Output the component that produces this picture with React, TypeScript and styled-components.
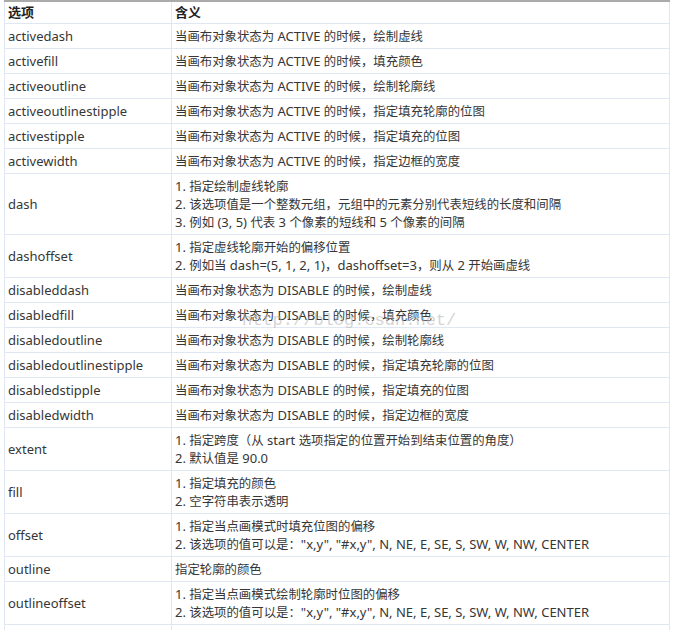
import React from "react";
import styled, { createGlobalStyle } from "styled-components";

const Global = createGlobalStyle`
  html, body { margin: 0; padding: 0; background: #fff; }
  body { font-family: "Noto Sans", "Noto Sans CJK SC", sans-serif; }
`;

const Page = styled.div`
  position: relative;
  padding-left: 4px;
  width: 666px;
  height: 630px;
  overflow: hidden;
`;

const Table = styled.table`
  width: 666px;
  border-collapse: collapse;
  table-layout: fixed;
  font-size: 13px;
  line-height: 18px;
  color: #363636;
`;

const HeadCell = styled.th<{ $w?: number }>`
  text-align: left;
  font-weight: bold;
  color: #222;
  border-top: 2px solid #aaa;
  border-bottom: 1px solid #dfe8f2;
  border-left: 1px solid #dfe8f2;
  border-right: 1px solid #dfe8f2;
  padding: 1px 3px 2px;
  width: ${(p) => (p.$w ? `${p.$w}px` : "auto")};
`;

const Cell = styled.td`
  border: 1px solid #dfe8f2;
  padding: 3px 3px;
  vertical-align: middle;
  white-space: nowrap;
`;

const Line = styled.div`
  height: 18px;
  line-height: 18px;
`;

const Cjk = styled.span`
  font-size: 12.4px;
  line-height: 1;
`;

const Watermark = styled.div`
  position: absolute;
  left: 242px;
  top: 311px;
  font-family: "Liberation Mono", monospace;
  font-size: 17px;
  color: rgba(175, 175, 175, 0.55);
  pointer-events: none;
`;

const CJK_RE = /([\u3000-\u303f\u4e00-\u9fff\uff00-\uffef]+)/;

function Mixed({ text }: { text: string }) {
  const parts = text.split(CJK_RE);
  return (
    <>
      {parts.map((p, i) => (CJK_RE.test(p) ? <Cjk key={i}>{p}</Cjk> : <React.Fragment key={i}>{p}</React.Fragment>))}
    </>
  );
}

const rows: [string, string[]][] = [
  ["activedash", ["当画布对象状态为 ACTIVE 的时候，绘制虚线"]],
  ["activefill", ["当画布对象状态为 ACTIVE 的时候，填充颜色"]],
  ["activeoutline", ["当画布对象状态为 ACTIVE 的时候，绘制轮廓线"]],
  ["activeoutlinestipple", ["当画布对象状态为 ACTIVE 的时候，指定填充轮廓的位图"]],
  ["activestipple", ["当画布对象状态为 ACTIVE 的时候，指定填充的位图"]],
  ["activewidth", ["当画布对象状态为 ACTIVE 的时候，指定边框的宽度"]],
  [
    "dash",
    [
      "1. 指定绘制虚线轮廓",
      "2. 该选项值是一个整数元组，元组中的元素分别代表短线的长度和间隔",
      "3. 例如 (3, 5) 代表 3 个像素的短线和 5 个像素的间隔",
    ],
  ],
  [
    "dashoffset",
    ["1. 指定虚线轮廓开始的偏移位置", "2. 例如当 dash=(5, 1, 2, 1)，dashoffset=3，则从 2 开始画虚线"],
  ],
  ["disableddash", ["当画布对象状态为 DISABLE 的时候，绘制虚线"]],
  ["disabledfill", ["当画布对象状态为 DISABLE 的时候，填充颜色"]],
  ["disabledoutline", ["当画布对象状态为 DISABLE 的时候，绘制轮廓线"]],
  ["disabledoutlinestipple", ["当画布对象状态为 DISABLE 的时候，指定填充轮廓的位图"]],
  ["disabledstipple", ["当画布对象状态为 DISABLE 的时候，指定填充的位图"]],
  ["disabledwidth", ["当画布对象状态为 DISABLE 的时候，指定边框的宽度"]],
  ["extent", ["1. 指定跨度（从 start 选项指定的位置开始到结束位置的角度）", "2. 默认值是 90.0"]],
  ["fill", ["1. 指定填充的颜色", "2. 空字符串表示透明"]],
  [
    "offset",
    ["1. 指定当点画模式时填充位图的偏移", '2. 该选项的值可以是："x,y", "#x,y", N, NE, E, SE, S, SW, W, NW, CENTER'],
  ],
  ["outline", ["指定轮廓的颜色"]],
  [
    "outlineoffset",
    ["1. 指定当点画模式绘制轮廓时位图的偏移", '2. 该选项的值可以是："x,y", "#x,y", N, NE, E, SE, S, SW, W, NW, CENTER'],
  ],
];

export default function App() {
  return (
    <Page>
      <Global />
      <Table>
        <thead>
          <tr>
            <HeadCell $w={160}>选项</HeadCell>
            <HeadCell>含义</HeadCell>
          </tr>
        </thead>
        <tbody>
          {rows.map(([name, lines]) => (
            <tr key={name}>
              <Cell>{name}</Cell>
              <Cell>
                {lines.map((l, i) => (
                  <Line key={i}>
                    <Mixed text={l} />
                  </Line>
                ))}
              </Cell>
            </tr>
          ))}
          <tr>
            <Cell>&nbsp;</Cell>
            <Cell>&nbsp;</Cell>
          </tr>
        </tbody>
      </Table>
      <Watermark>http://blog.csdn.net/</Watermark>
    </Page>
  );
}
